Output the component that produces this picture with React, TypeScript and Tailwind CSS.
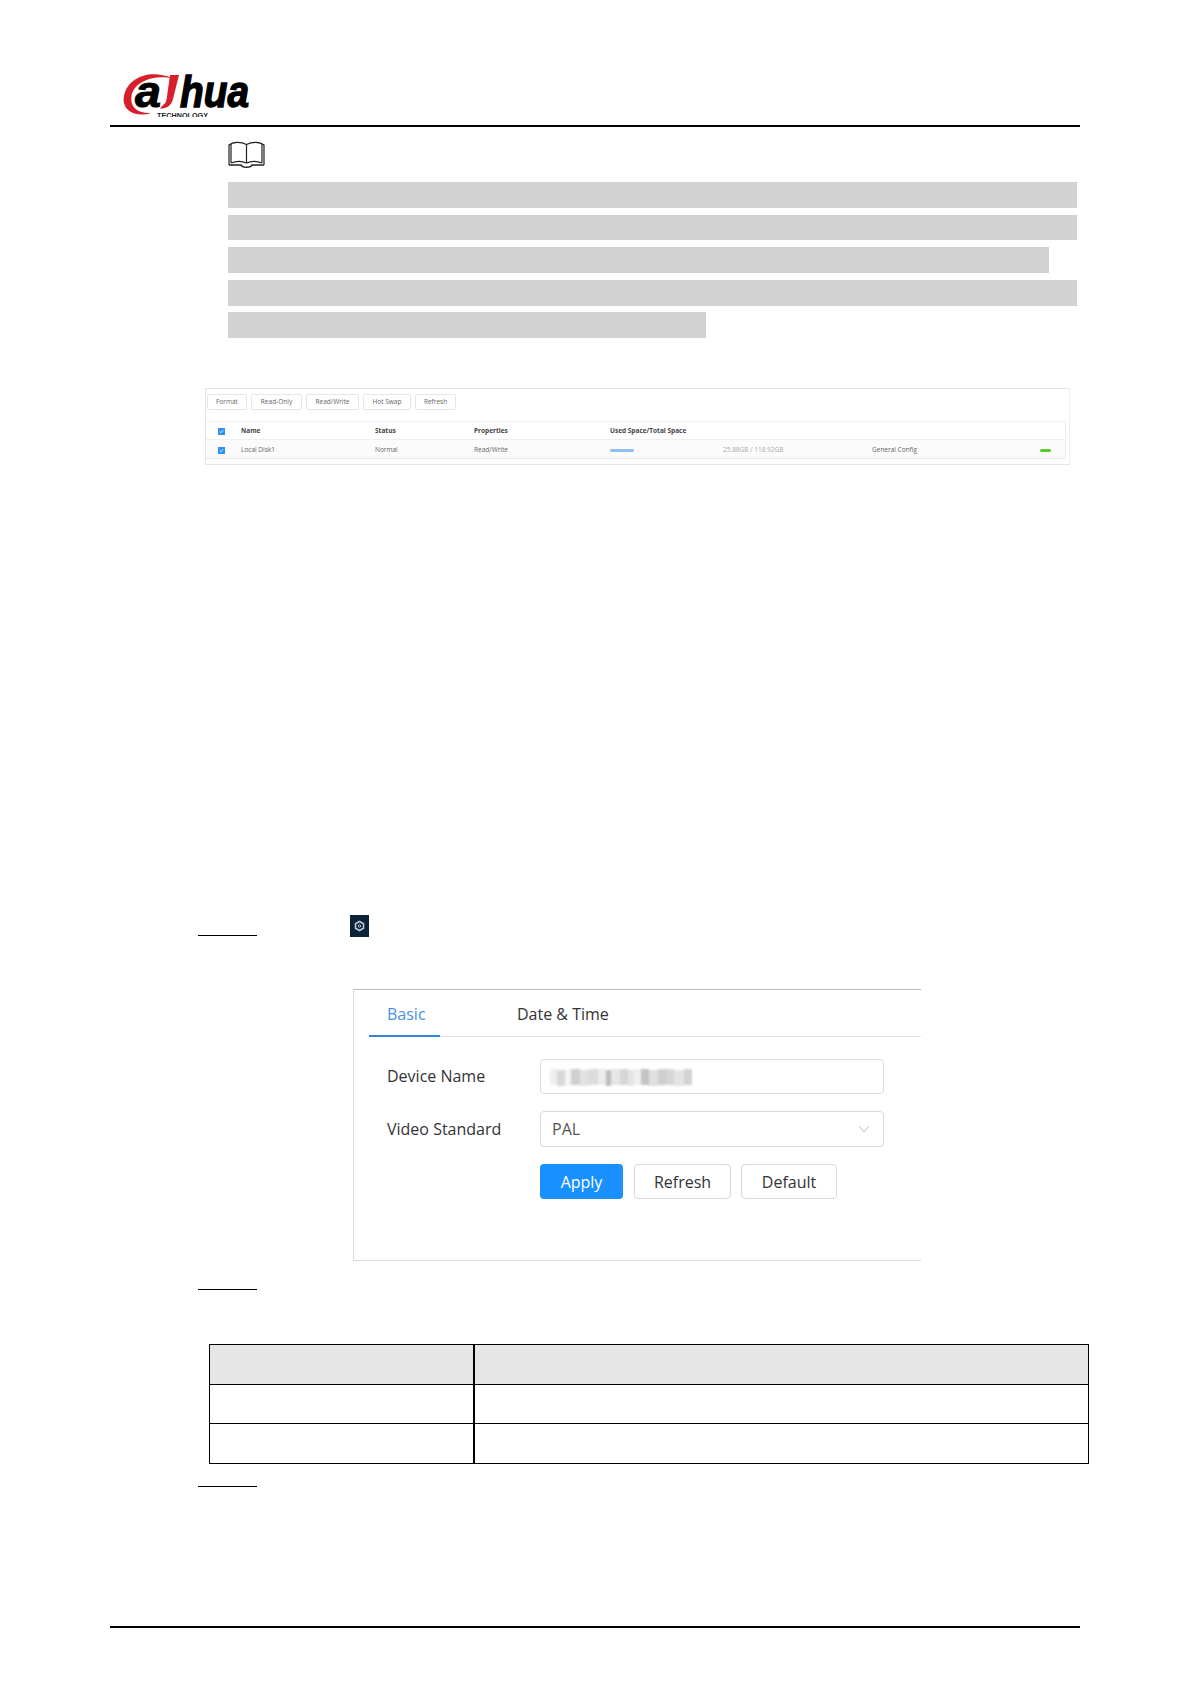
const sans = "font-['Open_Sans','Noto_Sans',sans-serif]";

function Logo() {
    return (
        <svg width="135" height="47" viewBox="120 70 135 47" className="block">
            <path d="M172 78 C150 69 128 77 124 96 C121 110 135 118 151 113 C139 114 129.500 108 131.500 96 C134 83 150 75 172 78 Z" fill="#d7202c" />
            <text x="135" y="107" fontFamily="Liberation Sans" fontWeight="700" fontStyle="italic" fontSize="44" textLength="26" lengthAdjust="spacingAndGlyphs" fill="#000" stroke="#000" strokeWidth="1">a</text>
            <path d="M170 75 L179 75 L173 99 C171 106 167 108.500 160 108.500 L163 105 C165 104 166 102 166.500 100 Z" fill="#d7202c" />
            <text x="180" y="107" fontFamily="Liberation Sans" fontWeight="700" fontStyle="italic" fontSize="44" textLength="69" lengthAdjust="spacingAndGlyphs" fill="#000" stroke="#000" strokeWidth="1.400">hua</text>
            <text x="157" y="117.500" fontFamily="Liberation Sans" fontWeight="700" fontSize="7.500" textLength="51" lengthAdjust="spacingAndGlyphs" fill="#222">TECHNOLOGY</text>
        </svg>
    );
}

function BookIcon() {
    return (
        <svg width="37" height="28" viewBox="0 0 37 28" fill="none" stroke="#222" strokeWidth="1.200" className="block">
            <path d="M1 24 L1 4 C5 0.500 13 0.500 18.500 3.500 C24 0.500 32 0.500 36 4 L36 24" />
            <path d="M3 22 L3 3 M34 22 L34 3 M18.500 3.500 L18.500 22" />
            <path d="M3 22 C8 20 14 20 18.500 22 C23 20 29 20 34 22" />
            <path d="M1 24 L13 24 C14 27 23 27 24 24 L36 24" strokeWidth="1.500" />
        </svg>
    );
}

function Check() {
    return (
        <div className="w-[7px] h-[7px] bg-[#2f93ee] flex items-center justify-center">
            <svg width="5" height="5" viewBox="0 0 5 5" fill="none" stroke="#fff" strokeWidth="0.800">
                <path d="M0.800 2.500 L2 3.700 L4.200 1.200" />
            </svg>
        </div>
    );
}

function SmallButton({ label, width }: { label: string; width: string }) {
    return (
        <div className={`${width} h-[16px] border border-[#e6e6e6] rounded-[2px] flex items-center justify-center text-[#666]`}>
            {label}
        </div>
    );
}

function StorageCard() {
    return (
        <div className={`ml-[205px] mt-[50px] w-[865px] h-[77px] border border-[#e4e4e4] border-r-[#efefef] text-[6.500px] leading-none ${sans}`}>
            <div className="flex gap-[4px] pl-[1px] pt-[5px]">
                <SmallButton label="Format" width="w-[40px]" />
                <SmallButton label="Read-Only" width="w-[51px]" />
                <SmallButton label="Read/Write" width="w-[53px]" />
                <SmallButton label="Hot Swap" width="w-[48px]" />
                <SmallButton label="Refresh" width="w-[41px]" />
            </div>
            <div className="mt-[11px] w-[860px] border-r border-[#efefef]">
                <div className="h-[19px] pt-[2px] border-t border-[#efefef] border-b flex items-center font-bold text-[#444]">
                    <div className="w-[35px] pl-[12px]"><Check /></div>
                    <div className="w-[134px]">Name</div>
                    <div className="w-[99px]">Status</div>
                    <div className="w-[136px]">Properties</div>
                    <div>Used Space/Total Space</div>
                </div>
                <div className="h-[19px] pt-[2px] bg-[#fbfbfb] border-b border-[#e8e8e8] flex items-center text-[#666]">
                    <div className="w-[35px] pl-[12px]"><Check /></div>
                    <div className="w-[134px]">Local Disk1</div>
                    <div className="w-[99px]">Normal</div>
                    <div className="w-[136px]">Read/Write</div>
                    <div className="w-[113px]">
                        <div className="w-[24px] h-[3px] rounded-full bg-[#8ec0ee]" />
                    </div>
                    <div className="w-[149px] text-[#aaa]">25.88GB / 118.92GB</div>
                    <div className="w-[168px]">General Config</div>
                    <div className="w-[11px] h-[3px] rounded-full bg-[#5ec72e]" />
                </div>
            </div>
        </div>
    );
}

function StepLine({ className }: { className: string }) {
    return <div className={`ml-[198px] w-[59px] h-px bg-black ${className}`} />;
}

function BlurredName() {
    const blocks = [
        "w-[7px] bg-[#eeeeee]", "w-[8px] bg-[#d8d8d8]", "w-[6px] bg-[#f4f4f4]", "w-[9px] bg-[#cfcfcf]",
        "w-[8px] bg-[#e2e2e2]", "w-[10px] bg-[#dcdcdc]", "w-[8px] bg-[#ececec]", "w-[5px] bg-[#bdbdbd]",
        "w-[9px] bg-[#e6e6e6]", "w-[8px] bg-[#d6d6d6]", "w-[6px] bg-[#e4e4e4]", "w-[7px] bg-[#f0f0f0]",
        "w-[8px] bg-[#c4c4c4]", "w-[9px] bg-[#e0e0e0]", "w-[8px] bg-[#cfcfcf]", "w-[8px] bg-[#d6d6d6]",
        "w-[10px] bg-[#e4e4e4]", "w-[8px] bg-[#d2d2d2]",
    ];
    return (
        <div className="ml-[9px] flex h-[16px] blur-[1px]">
            {blocks.map((b, i) => (
                <div key={i} className={`${b} h-full ${i % 3 === 1 ? "mt-[1px]" : ""}`} />
            ))}
        </div>
    );
}

function BasicPanel() {
    return (
        <div className={`ml-[353px] mt-[52px] w-[568px] h-[272px] border border-r-0 border-[#dcdcdc] border-t-[#bdbdbd] text-[16px] text-[#333] ${sans}`}>
            <div className="ml-[15px] h-[47px] flex border-b border-[#e4e4e4]">
                <div className="w-[71px] h-[47px] border-b-2 border-[#2f86d6] text-[#4a8fe0] pl-[18px] pt-[13px] leading-[22px]">Basic</div>
                <div className="ml-[77px] pt-[13px] leading-[22px]">Date &amp; Time</div>
            </div>
            <div className="flex items-center mt-[22px]">
                <div className="w-[186px] pl-[33px] pb-[2px]">Device Name</div>
                <div className="w-[344px] h-[35px] border border-[#d9d9d9] rounded-[4px] flex items-center">
                    <BlurredName />
                </div>
            </div>
            <div className="flex items-center mt-[17px]">
                <div className="w-[186px] pl-[33px]">Video Standard</div>
                <div className="w-[344px] h-[36px] border border-[#d9d9d9] rounded-[4px] flex items-center justify-between pl-[11px] pr-[13px] text-[#555]">
                    PAL
                    <svg width="12" height="8" viewBox="0 0 12 8" fill="none" stroke="#bbb" strokeWidth="1">
                        <path d="M1 1 L6 7 L11 1" />
                    </svg>
                </div>
            </div>
            <div className="flex mt-[17px] ml-[186px]">
                <div className="w-[83px] h-[35px] rounded-[4px] bg-[#1890ff] text-white flex items-center justify-center">Apply</div>
                <div className="ml-[11px] w-[97px] h-[35px] rounded-[4px] border border-[#d9d9d9] flex items-center justify-center">Refresh</div>
                <div className="ml-[10px] w-[96px] h-[35px] rounded-[4px] border border-[#d9d9d9] flex items-center justify-center">Default</div>
            </div>
        </div>
    );
}

function ParamTable() {
    return (
        <div className="ml-[209px] mt-[54px] w-[880px] h-[120px] border border-black grid grid-cols-[265px_1fr] grid-rows-[40px_39px_1fr]">
            <div className="bg-[#e6e6e6] border-r-2 border-b border-black" />
            <div className="bg-[#e6e6e6] border-b border-black" />
            <div className="border-r-2 border-b border-black" />
            <div className="border-b border-black" />
            <div className="border-r-2 border-black" />
            <div />
        </div>
    );
}

export default function App() {
    return (
        <div className="w-[1191px] h-[1684px] bg-white flex flex-col overflow-hidden">
            <div className="ml-[110px] w-[970px] h-[127px] border-b-2 border-black pt-[70px] pl-[10px]">
                <Logo />
            </div>

            <div className="ml-[228px] mt-[14px]">
                <BookIcon />
            </div>
            <div className="ml-[228px] mt-[13px] flex flex-col">
                <div className="w-[849px] h-[26px] bg-[#d2d2d2]" />
                <div className="w-[849px] h-[25px] mt-[7px] bg-[#d2d2d2]" />
                <div className="w-[821px] h-[26px] mt-[7px] bg-[#d2d2d2]" />
                <div className="w-[849px] h-[26px] mt-[7px] bg-[#d2d2d2]" />
                <div className="w-[478px] h-[26px] mt-[6px] bg-[#d2d2d2]" />
            </div>

            <StorageCard />

            <div className="mt-[450px] flex items-end h-[22px]">
                <StepLine className="mb-[1px]" />
                <div className="ml-[93px] w-[19px] h-[22px] bg-[#0b2239] flex items-center justify-center">
                    <svg width="11" height="12" viewBox="0 0 11 12" fill="none" stroke="#b9c9d6" strokeWidth="1.600">
                        <path d="M5.500 1.500 L9.500 3.700 L9.500 8.300 L5.500 10.500 L1.500 8.300 L1.500 3.700 Z" />
                        <circle cx="5.500" cy="6" r="1.200" strokeWidth="1" />
                    </svg>
                </div>
            </div>

            <BasicPanel />

            <StepLine className="mt-[28px]" />
            <ParamTable />
            <StepLine className="mt-[22px]" />

            <div className="ml-[110px] w-[970px] h-[2px] bg-black mt-[139px]" />
        </div>
    );
}
